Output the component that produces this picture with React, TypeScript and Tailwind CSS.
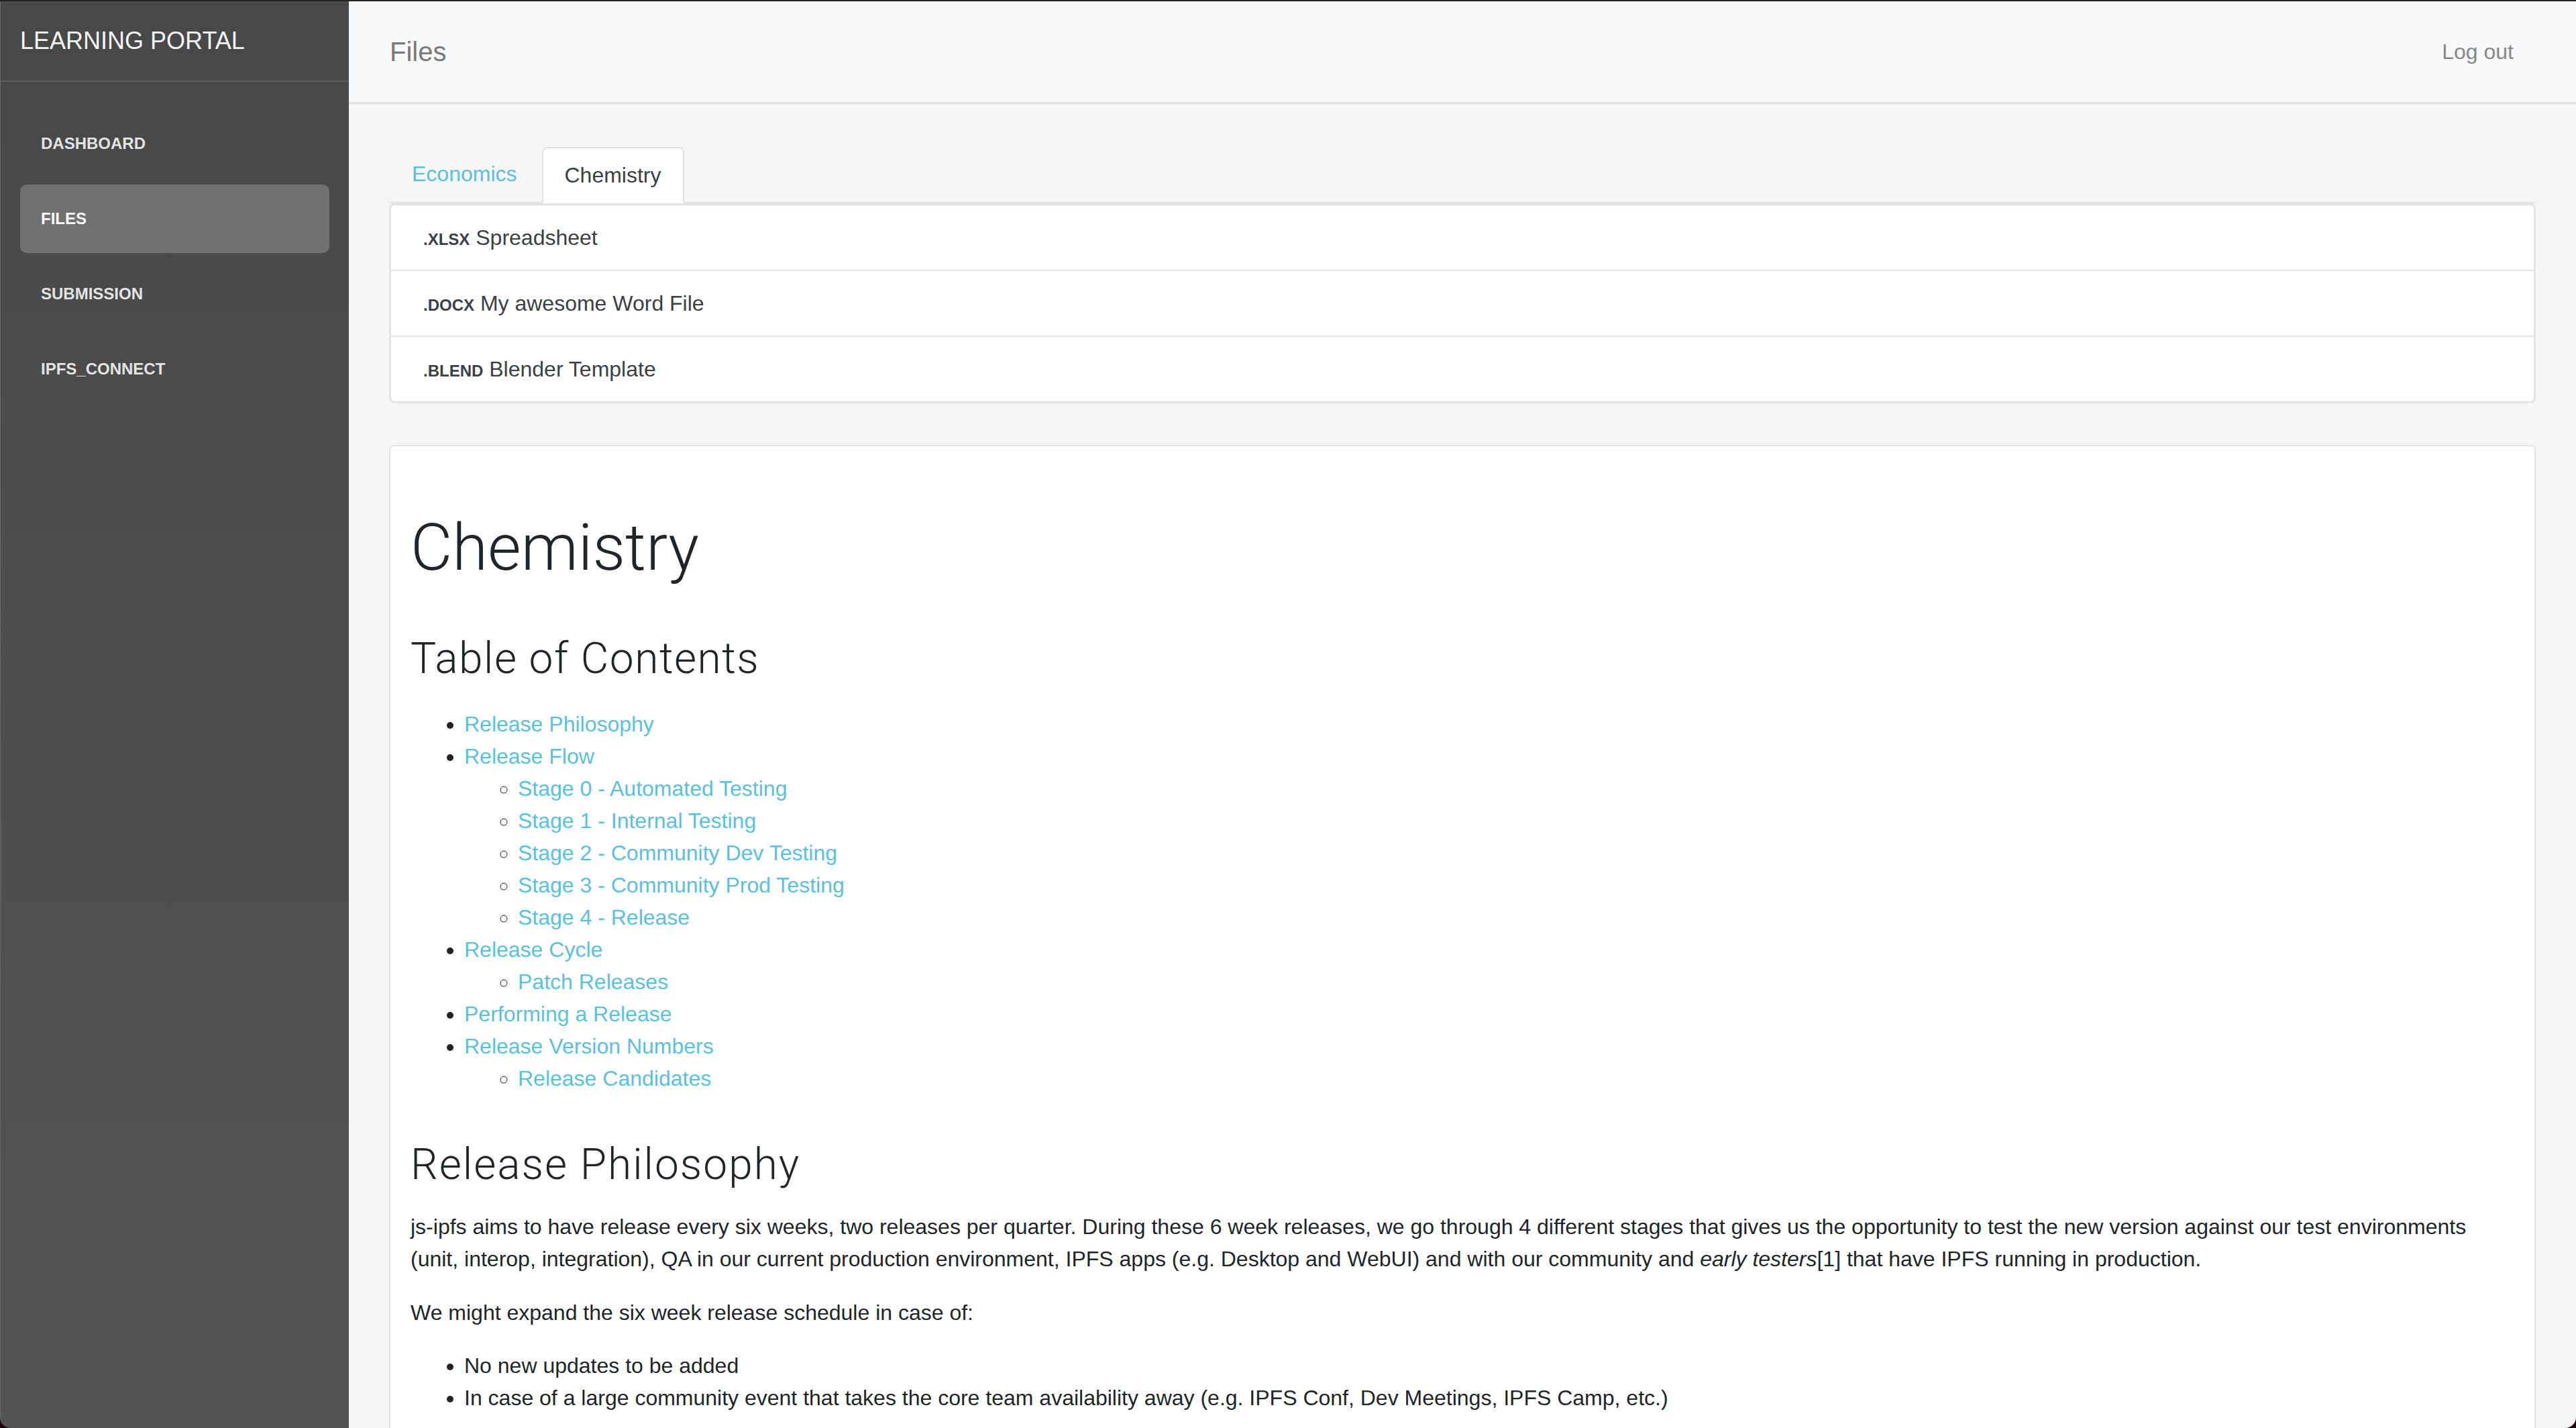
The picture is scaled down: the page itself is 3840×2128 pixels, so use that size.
import React from "react";

const navItems = ["DASHBOARD", "FILES", "SUBMISSION", "IPFS_CONNECT"];

const files = [
  { ext: ".XLSX", name: "Spreadsheet" },
  { ext: ".DOCX", name: "My awesome Word File" },
  { ext: ".BLEND", name: "Blender Template" },
];

type TocItem = { title: string; children?: string[] };

const toc: TocItem[] = [
  { title: "Release Philosophy" },
  {
    title: "Release Flow",
    children: [
      "Stage 0 - Automated Testing",
      "Stage 1 - Internal Testing",
      "Stage 2 - Community Dev Testing",
      "Stage 3 - Community Prod Testing",
      "Stage 4 - Release",
    ],
  },
  { title: "Release Cycle", children: ["Patch Releases"] },
  { title: "Performing a Release" },
  { title: "Release Version Numbers", children: ["Release Candidates"] },
];

function Sidebar() {
  return (
    <aside className="w-[520px] shrink-0 flex flex-col bg-gradient-to-b from-[#484848] to-[#545454] border-l border-[#686868]">
      <div className="h-[120px] flex items-center pl-[29px] text-[36px] text-[#f4f4f4] border-b-2 border-[#5f5f5f]">
        LEARNING PORTAL
      </div>
      <nav className="pt-[41px] px-[29px] flex flex-col gap-[10px]">
        {navItems.map((item) => (
          <a
            key={item}
            href="#"
            className={`h-[102px] flex items-center px-[31px] text-[24px] font-bold rounded-[10px] ${
              item === "FILES" ? "bg-[#717171] text-white" : "text-[#e4e4e4]"
            }`}
          >
            {item}
          </a>
        ))}
      </nav>
    </aside>
  );
}

function Header() {
  return (
    <header className="h-[153px] shrink-0 flex items-center justify-between pl-[61px] pr-[93px] bg-[#f8f9fa] border-b-[3px] border-[#e2e2e2]">
      <span className="text-[40px] text-[#7a7a7a]">Files</span>
      <a href="#" className="text-[32px] text-[#888888]">
        Log out
      </a>
    </header>
  );
}

function Tabs() {
  return (
    <div className="flex items-end border-b-2 border-[#dee2e6]">
      <a
        href="#"
        className="px-[32px] py-[16px] leading-[48px] text-[32px] text-[#5bc0de] border-2 border-transparent"
      >
        Economics
      </a>
      <a
        href="#"
        className="ml-[3px] -mb-[2px] px-[32px] py-[16px] leading-[48px] text-[32px] text-[#3b4046] bg-white border-2 border-[#dee2e6] border-b-white rounded-t-[8px]"
      >
        Chemistry
      </a>
    </div>
  );
}

function FileList() {
  return (
    <div className="border-[3px] border-[#e3e3e3] rounded-[8px] bg-white">
      {files.map((f, i) => (
        <div
          key={f.ext}
          className={`h-[96px] flex items-center px-[48px] text-[32px] text-[#3b4046] ${
            i > 0 ? "border-t-2 border-[#e6e6e6] h-[98px]" : ""
          }`}
        >
          <span className="leading-none">
            <span className="text-[24px] font-bold">{f.ext}</span> {f.name}
          </span>
        </div>
      ))}
    </div>
  );
}

function Content() {
  return (
    <div className="mt-[62px] bg-white border-2 border-[#e5e5e5] rounded-t-[6px] px-[30px] pt-[94px] pb-[300px] text-[32px] leading-[48px] text-[#212529]">
      <h1 className="font-['Roboto',sans-serif] font-light text-[96px] leading-[115px]">Chemistry</h1>
      <h2 className="mt-[69px] font-['Roboto',sans-serif] font-light text-[64px] leading-[77px] tracking-[1.5px]">
        Table of Contents
      </h2>
      <ul className="mt-[35px] list-disc pl-[80px]">
        {toc.map((item) => (
          <li key={item.title}>
            <a href="#" className="text-[#5bc0de]">
              {item.title}
            </a>
            {item.children && (
              <ul className="list-[circle] pl-[80px]">
                {item.children.map((c) => (
                  <li key={c}>
                    <a href="#" className="text-[#5bc0de]">
                      {c}
                    </a>
                  </li>
                ))}
              </ul>
            )}
          </li>
        ))}
      </ul>
      <h2 className="mt-[66px] font-['Roboto',sans-serif] font-light text-[64px] leading-[77px] tracking-[2px]">
        Release Philosophy
      </h2>
      <p className="mt-[30px]">
        js-ipfs aims to have release every six weeks, two releases per quarter. During these 6 week releases, we go
        through 4 different stages that gives us the opportunity to test the new version against our test environments
        (unit, interop, integration), QA in our current production environment, IPFS apps (e.g. Desktop and WebUI) and
        with our community and <em>early testers</em>[1] that have IPFS running in production.
      </p>
      <p className="mt-[32px]">We might expand the six week release schedule in case of:</p>
      <ul className="mt-[31px] list-disc pl-[80px]">
        <li>No new updates to be added</li>
        <li>
          In case of a large community event that takes the core team availability away (e.g. IPFS Conf, Dev Meetings,
          IPFS Camp, etc.)
        </li>
      </ul>
    </div>
  );
}

export default function App() {
  return (
    <div className="w-[3840px] h-[2128px] bg-[#1c0808] overflow-hidden font-['Liberation_Sans',Arial,sans-serif]">
      <div className="h-full flex border-t-2 border-[#232323] rounded-b-[16px] overflow-hidden">
        <Sidebar />
        <main className="flex-1 flex flex-col bg-[#f6f6f6] min-w-0 overflow-hidden">
          <Header />
          <div className="px-[60px] pt-[62px]">
            <Tabs />
            <FileList />
            <Content />
          </div>
        </main>
      </div>
    </div>
  );
}
